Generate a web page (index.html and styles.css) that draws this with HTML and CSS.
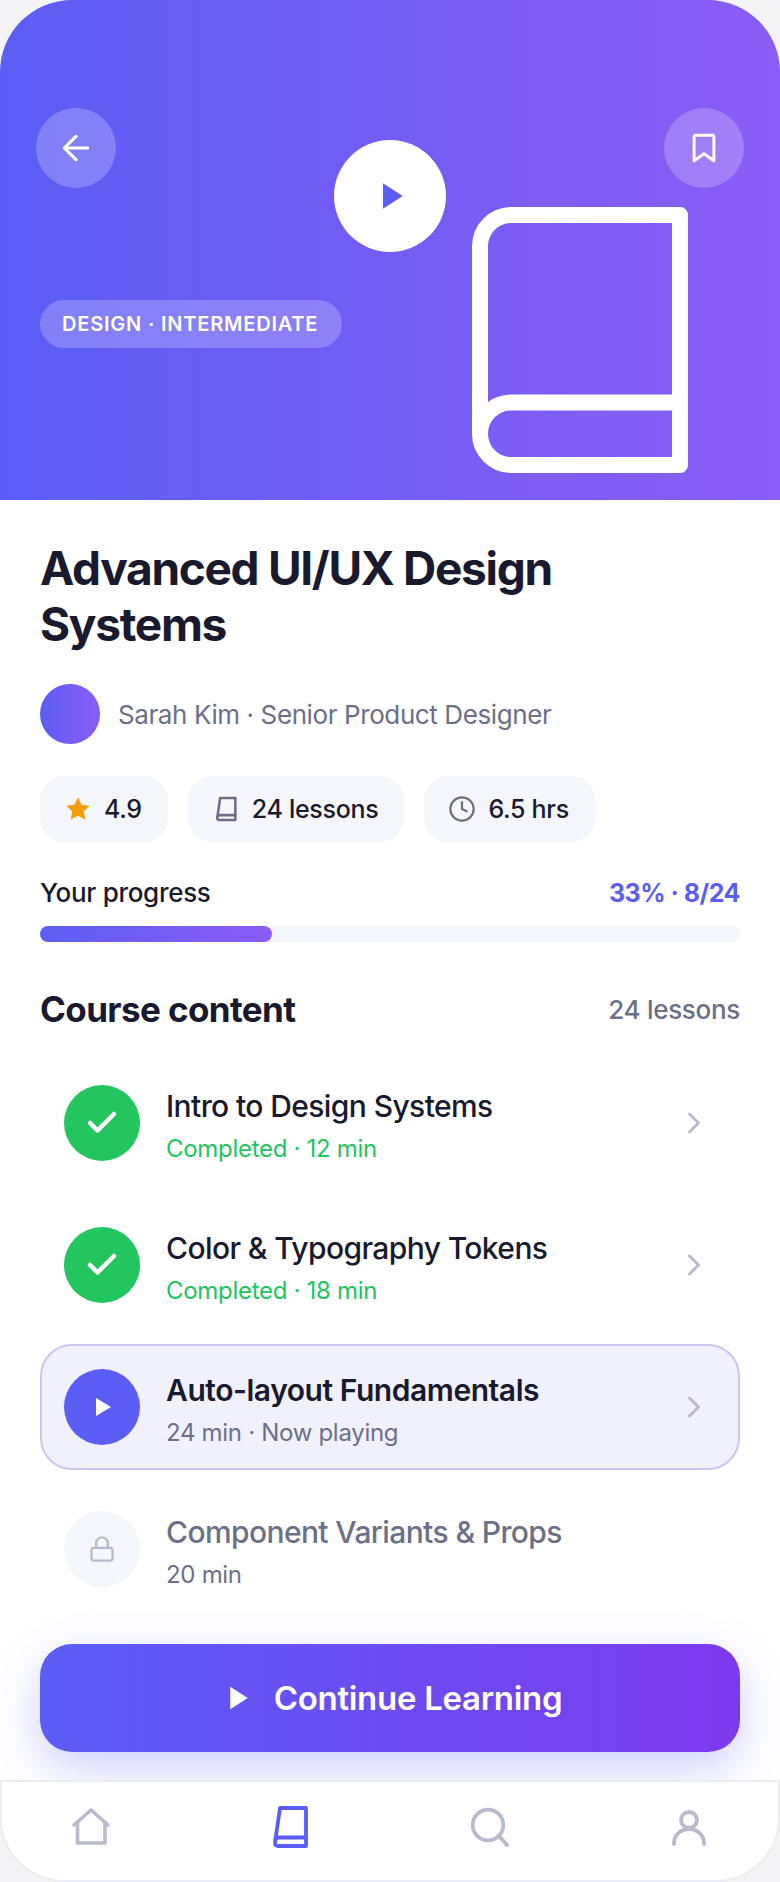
FILE: index.html
```html
<!DOCTYPE html>
<html lang="en">
<head>
  <meta charset="UTF-8" />
  <meta name="viewport" content="width=device-width, initial-scale=1.0" />
  <title>Advanced UI/UX Design Systems</title>
  <link rel="stylesheet" href="styles.css">
</head>
<body>
  <div class="screen">
    <header class="hero">
      <svg class="hero-book" viewBox="0 0 24 24" fill="none" stroke="#fff" stroke-width="1.28" stroke-linecap="round" stroke-linejoin="round">
        <path d="M4 19.5A2.5 2.5 0 0 1 6.5 17H20" />
        <path d="M6.5 2H20v20H6.5A2.5 2.5 0 0 1 4 19.5v-15A2.5 2.5 0 0 1 6.5 2z" />
      </svg>
      <div class="hero-play">
        <svg class="icon-34" viewBox="0 0 24 24" fill="#5b5ef5"><polygon points="7 3 21 12 7 21" /></svg>
      </div>
      <div class="hero-top">
        <button class="round-btn">
          <svg class="icon-40" viewBox="0 0 24 24" fill="none" stroke="#fff" stroke-width="1.9" stroke-linecap="round" stroke-linejoin="round">
            <path d="M19 12H5" /><path d="M12 19l-7-7 7-7" />
          </svg>
        </button>
        <button class="round-btn">
          <svg class="icon-34" viewBox="0 0 24 24" fill="none" stroke="#fff" stroke-width="2.1" stroke-linecap="round" stroke-linejoin="round">
            <path d="M19 21l-7-5-7 5V4a1 1 0 0 1 1-1h12a1 1 0 0 1 1 1z" />
          </svg>
        </button>
      </div>
      <span class="badge">DESIGN · INTERMEDIATE</span>
    </header>

    <main class="content">
      <h1>Advanced UI/UX Design Systems</h1>

      <div class="author">
        <div class="avatar"></div>
        <span>Sarah Kim · Senior Product Designer</span>
      </div>

      <div class="chips">
        <div class="chip">
          <svg class="icon-28" viewBox="0 0 24 24" fill="#f59e0b"><polygon points="12 2 15.09 8.26 22 9.27 17 14.14 18.18 21.02 12 17.77 5.82 21.02 7 14.14 2 9.27 8.91 8.26" /></svg>
          4.9
        </div>
        <div class="chip">
          <svg class="icon-28" viewBox="0 0 48 48" fill="none" stroke="#6b7088" stroke-width="4.4" stroke-linecap="round" stroke-linejoin="round">
            <path d="M14 5H40V43H12a3 3 0 0 1-3-3.5L14 5z" /><path d="M9.5 37q1-2.5 3.5-2.5H40" />
          </svg>
          24 lessons
        </div>
        <div class="chip">
          <svg class="icon-28" viewBox="0 0 24 24" fill="none" stroke="#6b7088" stroke-width="1.9" stroke-linecap="round" stroke-linejoin="round">
            <circle cx="12" cy="12" r="10" /><polyline points="12 6 12 12 16 14" />
          </svg>
          6.5 hrs
        </div>
      </div>

      <div class="progress-head">
        <span>Your progress</span>
        <span class="progress-num">33% · 8/24</span>
      </div>
      <div class="progress-bar"><div class="progress-fill" style="width: 33.2%"></div></div>

      <div class="section-head">
        <h2>Course content</h2>
        <span>24 lessons</span>
      </div>

      <div class="lessons">
        <div class="lesson">
          <div class="lesson-icon done">
            <svg class="icon-36" viewBox="0 0 24 24" fill="none" stroke="#fff" stroke-width="3" stroke-linecap="round" stroke-linejoin="round"><polyline points="20 6 9 17 4 12" /></svg>
          </div>
          <div class="lesson-text">
            <div class="lesson-title">Intro to Design Systems</div>
            <div class="lesson-sub done-text">Completed · 12 min</div>
          </div>
          <svg class="chevron icon-36" viewBox="0 0 24 24" fill="none" stroke="#b8bbce" stroke-width="2" stroke-linecap="round" stroke-linejoin="round"><polyline points="9 18 15 12 9 6" /></svg>
        </div>

        <div class="lesson">
          <div class="lesson-icon done">
            <svg class="icon-36" viewBox="0 0 24 24" fill="none" stroke="#fff" stroke-width="3" stroke-linecap="round" stroke-linejoin="round"><polyline points="20 6 9 17 4 12" /></svg>
          </div>
          <div class="lesson-text">
            <div class="lesson-title">Color &amp; Typography Tokens</div>
            <div class="lesson-sub done-text">Completed · 18 min</div>
          </div>
          <svg class="chevron icon-36" viewBox="0 0 24 24" fill="none" stroke="#b8bbce" stroke-width="2" stroke-linecap="round" stroke-linejoin="round"><polyline points="9 18 15 12 9 6" /></svg>
        </div>

        <div class="lesson current">
          <div class="lesson-icon playing">
            <svg class="icon-24" viewBox="0 0 24 24" fill="#fff"><polygon points="6 3 21 12 6 21" /></svg>
          </div>
          <div class="lesson-text">
            <div class="lesson-title">Auto-layout Fundamentals</div>
            <div class="lesson-sub">24 min · Now playing</div>
          </div>
          <svg class="chevron icon-36" viewBox="0 0 24 24" fill="none" stroke="#b8bbce" stroke-width="2" stroke-linecap="round" stroke-linejoin="round"><polyline points="9 18 15 12 9 6" /></svg>
        </div>

        <div class="lesson locked">
          <div class="lesson-icon lock">
            <svg class="icon-28" viewBox="0 0 24 24" fill="none" stroke="#b8bbce" stroke-width="2" stroke-linecap="round" stroke-linejoin="round">
              <rect x="3" y="11" width="18" height="11" rx="2" /><path d="M7 11V7a5 5 0 0 1 10 0v4" />
            </svg>
          </div>
          <div class="lesson-text">
            <div class="lesson-title">Component Variants &amp; Props</div>
            <div class="lesson-sub">20 min</div>
          </div>
        </div>
      </div>

      <button class="cta">
        <svg class="icon-30" viewBox="0 0 24 24" fill="#fff"><polygon points="5 3 19 12 5 21" /></svg>
        Continue Learning
      </button>
    </main>

    <nav class="tabbar">
      <svg class="icon-48" viewBox="0 0 48 48" fill="none" stroke="#b8bbce" stroke-width="3.6" stroke-linecap="round" stroke-linejoin="round">
        <path d="M7 22L24 7l17 15" /><path d="M10.5 19.5V40H38V19.5" />
      </svg>
      <svg class="icon-48" viewBox="0 0 48 48" fill="none" stroke="#5b5ef5" stroke-width="3.8" stroke-linecap="round" stroke-linejoin="round">
        <path d="M14 5H40V43H12a3 3 0 0 1-3-3.5L14 5z" /><path d="M9.5 37q1-2.5 3.5-2.5H40" />
      </svg>
      <svg class="icon-48" viewBox="0 0 48 48" fill="none" stroke="#b8bbce" stroke-width="3.8" stroke-linecap="round" stroke-linejoin="round">
        <circle cx="22" cy="22" r="15.3" /><path d="M33 33l8 9" />
      </svg>
      <svg class="icon-48" viewBox="0 0 48 48" fill="none" stroke="#b8bbce" stroke-width="3.8" stroke-linecap="round" stroke-linejoin="round">
        <circle cx="24" cy="17" r="8" /><path d="M9 41v-1a15 14 0 0 1 30 0v1" />
      </svg>
    </nav>
  </div>
</body>
</html>
```

FILE: styles.css
```css
:root {
  --indigo: #5b5ef5;
  --violet: #8b5cf6;
  --ink: #1a1a2e;
  --muted: #6b7088;
  --soft: #f5f6fb;
  --green: #22c55e;
}

* {
  box-sizing: border-box;
}

body {
  margin: 0;
  background: #f4f4f6;
  font-family: "Inter", "Liberation Sans", sans-serif;
  color: var(--ink);
}

.screen {
  width: 780px;
  height: 1882px;
  display: flex;
  flex-direction: column;
}

svg {
  display: block;
  flex-shrink: 0;
}

.icon-24 { width: 24px; height: 24px; }
.icon-28 { width: 28px; height: 28px; }
.icon-30 { width: 30px; height: 30px; }
.icon-34 { width: 34px; height: 34px; }
.icon-36 { width: 36px; height: 36px; }
.icon-40 { width: 40px; height: 40px; }
.icon-48 { width: 48px; height: 48px; }

/* Hero */
.hero {
  position: relative;
  height: 500px;
  padding: 108px 36px 0 36px;
  background: linear-gradient(90deg, var(--indigo), var(--violet));
  border-radius: 72px 72px 0 0;
}

.hero-top {
  display: flex;
  justify-content: space-between;
}

.round-btn {
  width: 80px;
  height: 80px;
  padding: 0;
  border: none;
  border-radius: 50%;
  background: rgba(255, 255, 255, 0.22);
  display: flex;
  align-items: center;
  justify-content: center;
}

.hero-book {
  position: absolute;
  left: 430px;
  top: 190px;
  width: 300px;
  height: 300px;
}

.hero-play {
  position: absolute;
  left: 334px;
  top: 140px;
  width: 112px;
  height: 112px;
  border-radius: 50%;
  background: #fff;
  display: flex;
  align-items: center;
  justify-content: center;
}

.badge {
  display: inline-block;
  margin: 112px 0 0 4px;
  height: 48px;
  padding: 0 24px 0 22px;
  line-height: 48px;
  border-radius: 24px;
  background: rgba(255, 255, 255, 0.22);
  color: #fff;
  font-size: 20px;
  font-weight: 600;
  letter-spacing: 0.8px;
}

/* Content */
.content {
  flex: 1;
  background: #fff;
  padding: 40px 40px 0 40px;
}

h1 {
  margin: 0;
  font-size: 46px;
  line-height: 56px;
  font-weight: 700;
  letter-spacing: -1.3px;
  color: var(--ink);
}

.author {
  display: flex;
  align-items: center;
  gap: 18px;
  margin-top: 32px;
  font-size: 26px;
  letter-spacing: -0.4px;
  color: var(--muted);
}

.avatar {
  width: 60px;
  height: 60px;
  border-radius: 50%;
  background: linear-gradient(90deg, var(--indigo), var(--violet));
}

.chips {
  display: flex;
  gap: 20px;
  margin-top: 32px;
}

.chip {
  height: 66px;
  padding: 0 26px 0 24px;
  border-radius: 24px;
  background: var(--soft);
  display: flex;
  align-items: center;
  gap: 12px;
  font-size: 25px;
  font-weight: 500;
  letter-spacing: -0.3px;
}

.progress-head {
  display: flex;
  justify-content: space-between;
  margin-top: 31px;
  font-size: 26px;
  line-height: 40px;
  font-weight: 500;
  letter-spacing: -0.3px;
}

.progress-num {
  color: var(--indigo);
  font-size: 25px;
  font-weight: 700;
  letter-spacing: -0.5px;
}

.progress-bar {
  height: 16px;
  margin-top: 13px;
  border-radius: 8px;
  background: var(--soft);
}

.progress-fill {
  height: 100%;
  border-radius: 8px;
  background: linear-gradient(90deg, var(--indigo), var(--violet));
}

.section-head {
  display: flex;
  justify-content: space-between;
  align-items: center;
  margin-top: 45px;
  font-size: 26px;
  font-weight: 500;
  letter-spacing: -0.3px;
  color: var(--muted);
}

h2 {
  margin: 0;
  font-size: 35px;
  line-height: 44px;
  font-weight: 700;
  letter-spacing: -0.6px;
  color: var(--ink);
}

.lessons {
  display: flex;
  flex-direction: column;
  gap: 16px;
  margin-top: 29px;
}

.lesson {
  display: flex;
  align-items: center;
  gap: 26px;
  height: 126px;
  padding: 0 22px;
  border: 2px solid transparent;
  border-radius: 32px;
}

.lesson.current {
  background: #f1f1fd;
  border-color: #c9c7f2;
}

.lesson-icon {
  width: 76px;
  height: 76px;
  border-radius: 50%;
  display: flex;
  align-items: center;
  justify-content: center;
  flex-shrink: 0;
}

.lesson-icon.done { background: var(--green); }
.lesson-icon.playing { background: var(--indigo); }
.lesson-icon.lock { background: var(--soft); }

.lesson-text {
  flex: 1;
  padding-top: 6px;
}

.lesson-title {
  font-size: 30px;
  line-height: 38px;
  font-weight: 500;
  letter-spacing: -0.6px;
}

.current .lesson-title {
  font-weight: 600;
  letter-spacing: -0.45px;
}

.lesson-sub {
  margin-top: 8px;
  font-size: 24px;
  line-height: 32px;
  letter-spacing: -0.3px;
  color: var(--muted);
}

.done-text {
  color: var(--green);
}

.locked .lesson-title {
  color: var(--muted);
}

.chevron {
  margin-right: 4px;
}

/* Main button */
.cta {
  width: 100%;
  height: 108px;
  margin-top: 32px;
  padding: 0 0 0 6px;
  border: none;
  border-radius: 32px;
  background: linear-gradient(90deg, var(--indigo), #7c3aed);
  box-shadow: 0 16px 48px rgba(91, 94, 245, 0.3);
  color: #fff;
  font-family: inherit;
  font-size: 33px;
  font-weight: 600;
  letter-spacing: -0.3px;
  display: flex;
  align-items: center;
  justify-content: center;
  gap: 20px;
}

/* Bottom tabs */
.tabbar {
  height: 102px;
  padding: 21px 65px 0 65px;
  background: #fff;
  border: 2px solid #ecedf3;
  border-radius: 0 0 64px 64px;
  display: flex;
  justify-content: space-between;
  align-items: flex-start;
}
```
